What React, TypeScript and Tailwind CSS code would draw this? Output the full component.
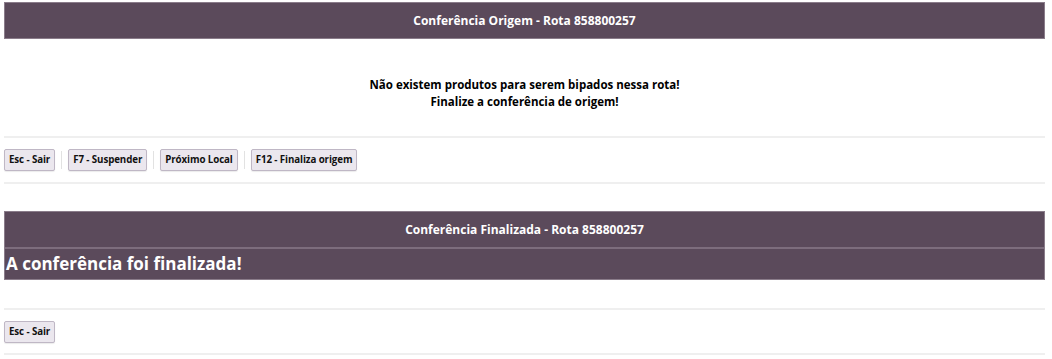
import React from "react";

const font = { fontFamily: '"Open Sans", "Noto Sans", sans-serif' };

function Btn({ children }: { children: React.ReactNode }) {
  return (
    <button className="h-[22px] px-[4px] bg-[#ebe7ee] border border-[#bfb7c5] rounded-[2px] text-[9.75px] font-bold text-[#111] leading-none tracking-[-0.1px] shadow-[0_1px_1px_rgba(0,0,0,0.08)]">
      {children}
    </button>
  );
}

function Divider() {
  return <div className="w-px h-[18px] bg-[#e2e2e2]" />;
}

export default function App() {
  return (
    <div className="bg-white w-[1052px] h-[359px] overflow-hidden" style={font}>
      <div className="ml-[4px] w-[1041px] pt-[2px]">
        <div className="h-[37px] bg-[#5b4a5b] border border-[#8a7c8a] flex items-center justify-center">
          <span className="text-white text-[12px] font-bold">Conferência Origem - Rota 858800257</span>
        </div>
        <div className="h-[97px] flex flex-col items-center justify-center pt-[10px] text-[11.5px] font-bold text-black leading-[17px]">
          <div>Não existem produtos para serem bipados nessa rota!</div>
          <div>Finalize a conferência de origem!</div>
        </div>
        <div className="h-[2px] bg-[#efefef]" />
        <div className="h-[44px] flex items-center gap-[6px]">
          <Btn>Esc - Sair</Btn>
          <Divider />
          <Btn>F7 - Suspender</Btn>
          <Divider />
          <Btn>Próximo Local</Btn>
          <Divider />
          <Btn>F12 - Finaliza origem</Btn>
        </div>
        <div className="h-[2px] bg-[#efefef]" />
        <div className="h-[27px]" />
        <div className="bg-[#5b4a5b] border border-[#8a7c8a]">
          <div className="h-[37px] flex items-center justify-center border-b-2 border-[#7d6d7d]">
            <span className="text-white text-[12px] font-bold">Conferência Finalizada - Rota 858800257</span>
          </div>
          <div className="h-[30px] flex items-center pl-[1px]">
            <span className="text-white text-[17px] font-bold">A conferência foi finalizada!</span>
          </div>
        </div>
        <div className="h-[28px]" />
        <div className="h-[2px] bg-[#efefef]" />
        <div className="h-[43px] flex items-center">
          <Btn>Esc - Sair</Btn>
        </div>
        <div className="h-[2px] bg-[#efefef]" />
      </div>
    </div>
  );
}
